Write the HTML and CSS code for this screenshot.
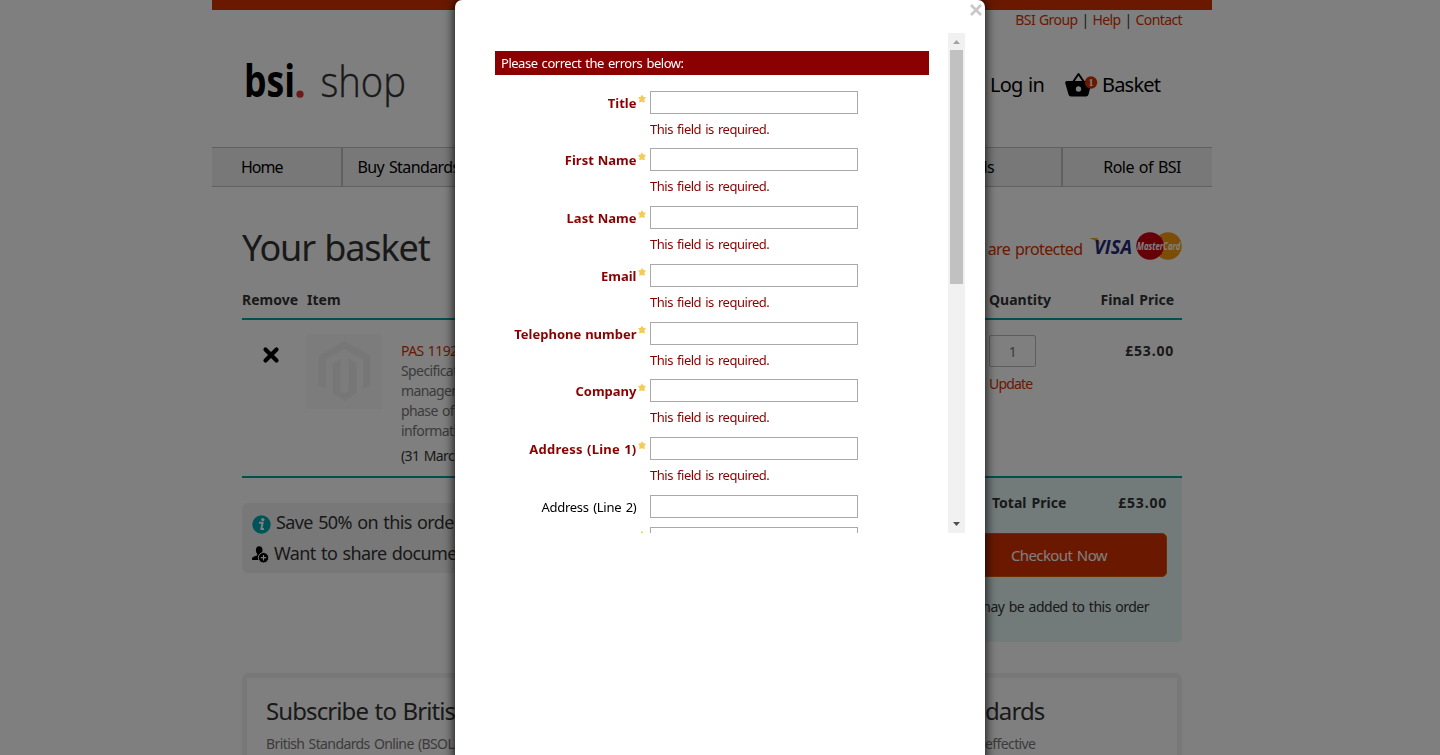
FILE: index.html
```html
<!DOCTYPE html>
<html lang="en">
<head>
<meta charset="utf-8">
<title>Your basket - BSI Shop</title>
<link rel="stylesheet" href="styles.css">
</head>
<body>
<div class="page">
  <div class="topbar"></div>
  <header class="header">
    <div class="toplinks"><a>BSI Group</a> | <a>Help</a> | <a>Contact</a></div>
    <div class="brand">
      <svg class="logo" width="170" height="54" viewBox="0 0 170 54">
        <text x="0" y="42" class="logo-bsi" textLength="51" lengthAdjust="spacingAndGlyphs">bsi</text>
        <circle cx="56" cy="39.200" r="3.600" fill="#d8362e"/>
        <text x="76.500" y="42" class="logo-shop" textLength="85.500" lengthAdjust="spacingAndGlyphs">shop</text>
      </svg>
      <div class="account">
        <a class="login">Log in</a>
        <svg class="cart" width="34" height="26" viewBox="0 0 34 26">
          <path d="M9 10 14.500 2 20 10" fill="none" stroke="#000" stroke-width="2" stroke-linejoin="round"/>
          <path d="M2.500 9H26Q28 9.500 27.500 11L24.500 22.500Q24 24.500 22 24.500H7Q5 24.500 4.500 22.500L1.200 11Q1 9.300 2.500 9Z" fill="#000"/>
          <circle cx="14.500" cy="17" r="2.700" fill="#fff"/>
          <circle cx="27" cy="10.500" r="6.200" fill="#d53200"/>
          <text x="27" y="14" class="cart-count">1</text>
        </svg>
        <a class="basket">Basket</a>
      </div>
    </div>
  </header>
  <nav class="nav">
    <a class="nav-home">Home</a>
    <a class="nav-buy">Buy Standards</a>
    <a class="nav-std">Standards</a>
    <a class="nav-role">Role of BSI</a>
  </nav>
  <main class="main">
    <div class="titlebar">
      <h1>Your basket</h1>
      <div class="protected">
        <span>are protected</span>
        <svg class="visa" width="43" height="18" viewBox="0 0 43 18">
          <path d="M0 1H7L9.500 4.500 10 8Q6 3 0 1.500Z" fill="#f0a020"/>
          <text x="4" y="16.500" class="visa-text" textLength="38" lengthAdjust="spacingAndGlyphs">VISA</text>
        </svg>
        <svg width="46" height="28" viewBox="0 0 46 28">
          <circle cx="32" cy="14" r="13.700" fill="#f79a0e"/>
          <circle cx="14" cy="14" r="13.700" fill="#cc0010"/>
          <path d="M20 6.500H26M19 9.500H27M19 18.500H27M20 21.500H26" stroke="#cc0010" stroke-width="1.500"/>
          <text x="1" y="18" class="mc-text" textLength="43.500" lengthAdjust="spacingAndGlyphs">MasterCard</text>
        </svg>
      </div>
    </div>
    <div class="cart-head">
      <b class="c-remove">Remove</b><b class="c-item">Item</b><b class="c-qty">Quantity</b><b class="c-price">Final Price</b>
    </div>
    <div class="cart-row">
      <div class="c-remove remove">
        <svg width="18" height="18" viewBox="0 0 18 18"><path d="M3.500 3.500 14.500 14.500M14.500 3.500 3.500 14.500" stroke="#000" stroke-width="4.200" stroke-linecap="round"/></svg>
      </div>
      <div class="thumb">
        <svg width="75" height="75" viewBox="0 0 76 76">
          <path d="M38 7 64 22V52L57 56V26L38 15 19 26V56L12 52V22Z" fill="#eee"/>
          <path d="M26 30 34 25V58L38 60.500 42 58V25L50 30V60L38 68 26 60Z" fill="#eee"/>
        </svg>
      </div>
      <div class="desc">
        <a>PAS 1192-3:2014</a>
        <p>Specification for<br>management in the<br>phase of assets using<br>information models</p>
        <span>(31 March 2014)</span>
      </div>
      <div class="c-qty qty"><div class="qty-box">1</div><a>Update</a></div>
      <b class="c-price amount">£53.00</b>
    </div>
    <div class="below">
      <div class="notes">
        <div class="note"><svg width="19" height="19" viewBox="0 0 19 19"><circle cx="9.500" cy="9.500" r="9.200" fill="#00a9b0"/><circle cx="10.800" cy="4.600" r="1.700" fill="#fff"/><path d="M7 7.800H10.600L9.400 13.900H12" fill="none" stroke="#fff" stroke-width="2"/></svg><span>Save 50% on this order</span></div>
        <div class="note share"><svg width="17" height="17" viewBox="0 0 17 17"><ellipse cx="7.200" cy="4.300" rx="3.300" ry="4.100"/><path d="M0 14V12.500Q0 11 5 9.500L5.500 7H9L9.500 9.500 7.500 14Z"/><circle cx="11.500" cy="11.700" r="5.200" stroke="#f1f1f1"/><path d="M11.500 9V14.400M8.800 11.700H14.200" stroke="#fff" stroke-width="1.200"/></svg><span>Want to share documents</span></div>
      </div>
      <div class="totals">
        <div class="total-row"><b>Total Price</b><b class="amount">£53.00</b></div>
        <a class="checkout"><span>Checkout Now</span></a>
        <div class="vat">may be added to this order</div>
      </div>
    </div>
    <section class="promo">
      <div class="promo-left"><h2>Subscribe to British</h2><p>British Standards Online (BSOL)</p></div>
      <div class="promo-right"><h2><span>dards</span></h2><p><span>effective</span></p></div>
    </section>
  </main>
</div>
<div class="overlay">
  <div class="modal">
    <svg class="close" width="12" height="12" viewBox="0 0 12 12"><path d="M1 1 11 11M11 1 1 11" stroke="#c8c8c8" stroke-width="2.600"/></svg>
    <div class="scroller">
      <form class="form">
        <div class="errors">Please correct the errors below:</div>
        <div class="field bad"><label>Title</label><i></i><div><input><p>This field is required.</p></div></div>
        <div class="field bad"><label>First Name</label><i></i><div><input><p>This field is required.</p></div></div>
        <div class="field bad"><label>Last Name</label><i></i><div><input><p>This field is required.</p></div></div>
        <div class="field bad"><label>Email</label><i></i><div><input><p>This field is required.</p></div></div>
        <div class="field bad"><label>Telephone number</label><i></i><div><input><p>This field is required.</p></div></div>
        <div class="field bad"><label>Company</label><i></i><div><input><p>This field is required.</p></div></div>
        <div class="field bad"><label class="wide">Address (Line 1)</label><i></i><div><input><p>This field is required.</p></div></div>
        <div class="field"><label class="wide">Address (Line 2)</label><div><input></div></div>
        <div class="field bad"><label></label><i></i><div><input></div></div>
      </form>
      <div class="scrollbar">
        <svg width="17" height="17" viewBox="0 0 17 17"><path d="M5 11 8.500 7 12 11Z" fill="#a3a3a3"/></svg>
        <div class="thumb-bar"></div>
        <svg class="down" width="17" height="17" viewBox="0 0 17 17"><path d="M5 6H12L8.500 10Z" fill="#505050"/></svg>
      </div>
    </div>
  </div>
</div>
</body>
</html>
```
FILE: styles.css
```css
* { box-sizing: border-box; }
body { margin: 0; height: 755px; overflow: hidden; background: #fff; color: #333; font: 14px/20px Tahoma, "Noto Sans", sans-serif; letter-spacing: -0.6px; word-spacing: 1.2px; }
h1, h2, p { margin: 0; font-weight: 400; }
a { color: #d53200; white-space: nowrap; }
b { letter-spacing: 0; word-spacing: 1.5px; }
svg { display: block; flex: none; overflow: visible; }
.page { width: 1000px; margin-left: 212px; height: 755px; overflow: hidden; }
.topbar { height: 10px; background: #d53200; }
.header { height: 137px; padding: 0 30px; }
.toplinks { height: 20px; text-align: right; color: #333; word-spacing: .9px; }
.brand { display: flex; justify-content: space-between; padding-top: 25px; }
.logo { margin-left: 2px; }
.logo-bsi { font: 700 44px "Open Sans", sans-serif; letter-spacing: 0; }
.logo-shop { font: 300 42px "Open Sans", sans-serif; letter-spacing: 0; fill: #333; stroke: #333; stroke-width: .4px; }
.account { display: flex; align-items: center; height: 60px; width: 192px; font-size: 20px; letter-spacing: -0.8px; }
.account a { color: #000; }
.login { width: 74px; }
.cart { margin-right: 4px; }
.cart-count { font: 700 10px "Liberation Serif", serif; fill: #fff; text-anchor: middle; letter-spacing: 0; }
.nav { display: flex; height: 40px; background: #f0f0f0; border: solid #c0c0c0; border-width: 1px 0; font-size: 16px; line-height: 38px; }
.nav a { color: #000; }
.nav-home { width: 131px; padding-left: 29px; border-right: 2px solid #c0c0c0; letter-spacing: -1px; }
.nav-buy { width: 370px; padding-left: 14.500px; }
.nav-std { width: 350px; padding-right: 67px; text-align: right; border-right: 2px solid #c0c0c0; }
.nav-role { flex: 1; padding-right: 31px; text-align: right; letter-spacing: -0.5px; }
.main { padding: 0 30px; }
.titlebar { display: flex; justify-content: space-between; height: 101px; padding-top: 38px; }
h1 { font-size: 36px; line-height: 46px; letter-spacing: -1.15px; }
.protected { display: flex; height: 42px; align-items: center; font-size: 16px; color: #d53200; }
.protected > span { margin-right: 7.500px; padding-top: 5px; }
.visa { margin-right: 3px; }
.visa-text { font: italic 700 20px "Open Sans", sans-serif; fill: #232a78; letter-spacing: 0; }
.mc-text { font: italic 700 11px "Open Sans", sans-serif; fill: #fff; letter-spacing: 0; }
.cart-head { display: flex; height: 32px; padding-top: 2px; border-bottom: 2px solid #00a0a0; }
.c-remove { width: 65px; flex: none; }
.c-item { width: 682px; }
.c-qty { width: 88px; flex: none; }
.c-price { flex: 1; padding-right: 8px; text-align: right; white-space: nowrap; }
.amount { letter-spacing: .8px; }
.cart-row { display: flex; height: 158px; border-bottom: 2px solid #00a0a0; }
.remove { padding: 26px 0 0 20px; }
.thumb { width: 75px; height: 75px; margin: 14px 19px 0 0; background: #f8f8f8; }
.desc { width: 588px; padding-top: 21px; }
.desc p { color: #777; }
.desc span { display: block; padding-top: 5px; }
.qty { padding-top: 15px; }
.qty-box { width: 47px; height: 32px; margin-bottom: 7px; border: 1px solid #bbb; border-radius: 2px; color: #777; text-align: center; line-height: 32px; }
.qty a { letter-spacing: -.8px; }
.cart-row .c-price { padding-top: 21px; padding-right: 8px; }
.below { display: flex; justify-content: space-between; height: 195px; }
.notes { width: 500px; height: 70px; margin-top: 25px; padding: 6px 10px; background: #f1f1f1; border-radius: 6px; font-size: 18px; line-height: 26px; }
.note { display: flex; gap: 5px; white-space: nowrap; }
.note svg { margin-top: 6px; }
.share { padding-top: 5px; }
.totals { width: 300px; height: 164px; padding: 15px 15px 0 0; background: #e4f4f4; border-radius: 0 0 5px 5px; }
.total-row { display: flex; justify-content: space-between; padding-left: 110px; }
.checkout { display: block; height: 44px; margin-top: 20px; padding-right: 59px; background: #d53200; border: 1px solid #d55a00; border-radius: 5px; color: #fff; font-size: 15px; line-height: 43px; text-align: right; }
.vat { margin-top: 20px; padding-right: 18px; text-align: right; letter-spacing: -.5px; }
.promo { display: flex; height: 120px; border: 5px solid #f1f1f1; border-radius: 6px; padding: 17px 19px; color: #777; }
.promo-left { width: 500px; }
.promo-right { flex: 1; padding-left: 219px; }
h2 { font-size: 24px; line-height: 32px; color: #333; letter-spacing: -.9px; }
.promo p { padding-top: 7px; }
.overlay { position: fixed; inset: 0; background: rgba(0, 0, 0, .5); }
.modal { width: 530px; height: 770px; margin: 0 auto; padding: 33px 20px 0 40px; background: #fff; border-radius: 7px; box-shadow: 0 0 12px #000; }
.close { position: absolute; top: 4px; left: 970px; }
.scroller { display: flex; justify-content: space-between; height: 500px; overflow: hidden; color: #000; font-size: 13px; letter-spacing: -.48px; word-spacing: 1.2px; }
.form { width: 434px; padding-top: 18px; }
.errors { height: 24px; padding-left: 6px; margin-bottom: 15.600px; background: #8b0000; color: #fff; line-height: 24px; }
.field { display: flex; height: 32px; }
.field label { width: 142px; padding-top: 2px; padding-right: .5px; text-align: right; white-space: nowrap; }
.field > div { margin-left: auto; width: 279px; }
.field i { width: 8px; height: 8px; margin: 4px 0 0 1px; background: #f4cc55; clip-path: polygon(50% 0, 66% 28%, 100% 34%, 80% 62%, 86% 100%, 50% 88%, 14% 100%, 20% 62%, 0 34%, 34% 28%); }
.bad { color: #8b0000; height: 57.750px; }
.bad label { font-weight: 700; letter-spacing: 0; word-spacing: .5px; }
.field .wide { letter-spacing: -.25px; }
.bad .wide { letter-spacing: .25px; }
.field input { display: block; width: 208px; height: 23px; margin: 0; padding: 1px; border: 1px solid #a9a9a9; background: #fff; }
.field p { padding-top: 5px; }
.scrollbar { display: flex; flex-direction: column; width: 17px; height: 500px; margin-left: auto; background: #f1f1f1; }
.thumb-bar { width: 13px; height: 234px; margin: 0 auto; background: #c1c1c1; }
.down { margin-top: auto; }
```
